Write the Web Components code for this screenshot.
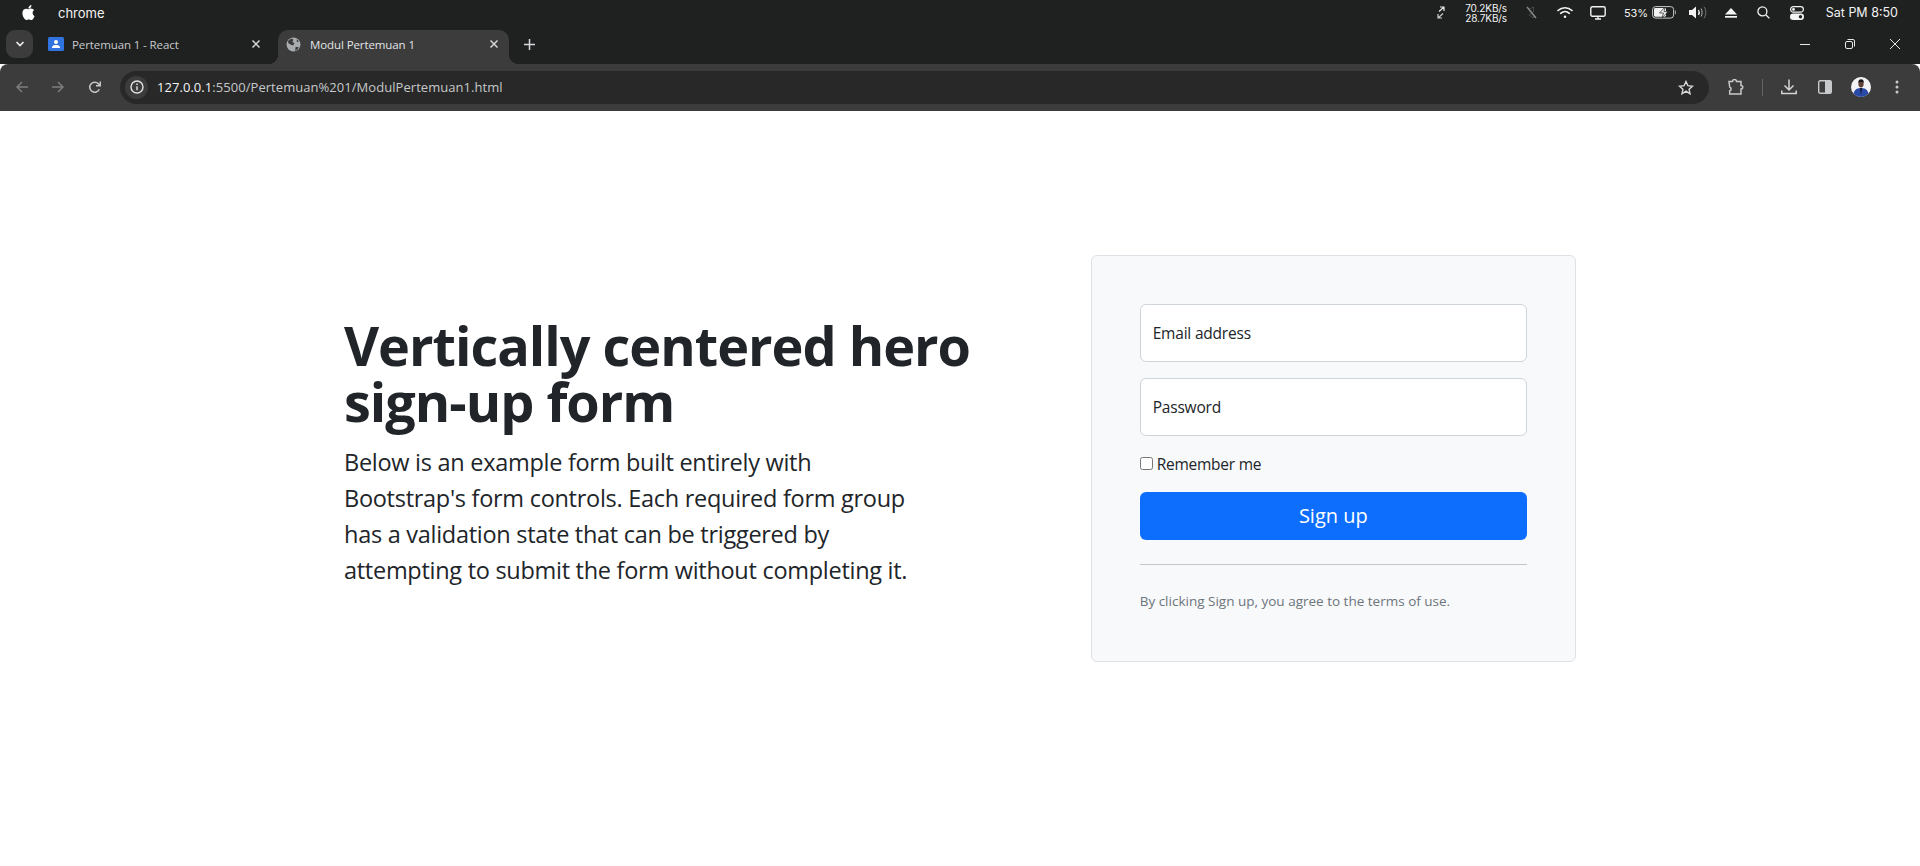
<!DOCTYPE html>
<html lang="en">
<head>
<meta charset="utf-8">
<title>Modul Pertemuan 1</title>
<style>
    html, body { margin: 0; height: 100%; background: #fff; overflow: hidden; }
    body { font-family: "Open Sans", "Noto Sans", sans-serif; color: #212529; }
</style>
</head>
<body>
<mac-menubar></mac-menubar>
<chrome-tabstrip>
    <chrome-tab icon="contact">Pertemuan 1 - React</chrome-tab>
    <chrome-tab icon="globe" active>Modul Pertemuan 1</chrome-tab>
</chrome-tabstrip>
<chrome-toolbar url-host="127.0.0.1" url-rest=":5500/Pertemuan%201/ModulPertemuan1.html"></chrome-toolbar>
<hero-section>
    <span slot="title">Vertically centered hero sign-up form</span>
    <span slot="lead">Below is an example form built entirely with Bootstrap's form controls. Each required form group has a validation state that can be triggered by attempting to submit the form without completing it.</span>
    <signup-form slot="aside">
        <float-field type="email">Email address</float-field>
        <float-field type="password">Password</float-field>
    </signup-form>
</hero-section>

<script>
const ICONS = {
    apple: `<svg width="15" height="17" viewBox="0 0 24 24" fill="#fff"><path d="M12.152 6.896c-.948 0-2.415-1.078-3.96-1.04-2.04.027-3.91 1.183-4.961 3.014-2.117 3.675-.546 9.103 1.519 12.09 1.013 1.454 2.208 3.09 3.792 3.039 1.52-.065 2.09-.987 3.935-.987 1.831 0 2.35.987 3.96.948 1.637-.026 2.676-1.48 3.676-2.948 1.156-1.688 1.636-3.325 1.662-3.415-.039-.013-3.182-1.221-3.22-4.857-.026-3.04 2.48-4.494 2.597-4.559-1.429-2.09-3.623-2.324-4.39-2.376-2-.156-3.675 1.09-4.61 1.09zM15.53 3.83c.843-1.012 1.4-2.427 1.245-3.83-1.207.052-2.662.805-3.532 1.818-.78.896-1.454 2.338-1.273 3.714 1.338.104 2.715-.688 3.559-1.701"/></svg>`,
    arrows: `<svg width="8" height="13" viewBox="0 0 8 13" fill="none" stroke="#e8e8e8" stroke-width="1.2"><path d="M3 1h4v4M7 1 2 5.5"/><path d="M1 8v4h4M1 12l5-4.5" opacity=".85"/></svg>`,
    bluetooth: `<svg width="11" height="13" viewBox="0 0 11 13" fill="none" stroke="#8b8b8b"><path d="M3 3.2 7.5 1v4.500L3 9l4.500 3V8" stroke-width=".8" opacity=".45"/><path d="M1 1l9 11" stroke-width="1.4"/></svg>`,
    wifi: `<svg width="16" height="13" viewBox="0 0 16 13" fill="none" stroke="#f2f2f2" stroke-width="1.7" stroke-linecap="round"><path d="M1 4.500c4-3.700 10-3.700 14 0"/><path d="M3.700 7.300c2.500-2.200 6.100-2.200 8.600 0"/><circle cx="8" cy="10.800" r=".7" fill="#f2f2f2" stroke-width="1.2"/></svg>`,
    monitor: `<svg width="16" height="14" viewBox="0 0 16 14" fill="none" stroke="#f2f2f2" stroke-width="1.4"><rect x=".8" y=".8" width="14.400" height="9.400" rx="1.400"/><path d="M5 13h6M8 10.500V13"/></svg>`,
    battery: `<svg width="25" height="13" viewBox="0 0 25 13"><rect x=".6" y=".6" width="21" height="11.500" rx="3" fill="none" stroke="#c9c9c9" stroke-width="1"/><rect x="2" y="2" width="12" height="8.700" rx="1.400" fill="#f2f2f2"/><path d="M13 1 7.500 7h4L10 12l6-6.400h-4z" fill="#f2f2f2" stroke="#202221" stroke-width=".7"/><path d="M23.400 4.500v3.600" stroke="#a8a8a8" stroke-width="1"/></svg>`,
    volume: `<svg width="18" height="13" viewBox="0 0 18 13" fill="none"><path d="M0 4h3l4-3.600v12L3 9H0z" fill="#f4f4f4"/><path d="M9.500 4c.9 1.500.9 3.500 0 5" stroke="#f4f4f4" stroke-width="1.3"/><path d="M12 2.500c1.500 2.500 1.500 5.500 0 8" stroke="#bbb" stroke-width="1"/><path d="M15 .8c2.400 3.600 2.400 7.800 0 11.400" stroke="#777" stroke-width="1"/></svg>`,
    eject: `<svg width="12" height="10" viewBox="0 0 12 10" fill="#f4f4f4"><path d="M6 0l6 6.400H0z"/><rect y="8" width="12" height="1.700"/></svg>`,
    search: `<svg width="13" height="13" viewBox="0 0 13 13" fill="none" stroke="#f4f4f4" stroke-width="1.3"><circle cx="5.400" cy="5.400" r="4.500"/><path d="M8.800 8.800l3.600 3.600"/></svg>`,
    toggles: `<svg width="14" height="14" viewBox="0 0 14 14"><rect x=".6" y=".6" width="12.800" height="5.600" rx="2.800" fill="none" stroke="#f4f4f4" stroke-width="1.2"/><circle cx="3.500" cy="3.400" r="1.400" fill="#f4f4f4"/><rect y="7.500" width="14" height="6.500" rx="3.200" fill="#f4f4f4"/><circle cx="10.500" cy="10.700" r="1.700" fill="#202221"/></svg>`,
    contact: `<svg width="16" height="14" viewBox="0 0 16 14"><rect width="16" height="14" rx="1.500" fill="#2f74e0"/><circle cx="8" cy="5" r="2" fill="#fff"/><path d="M4 10.500c0-1.800 2.400-2.400 4-2.400s4 .6 4 2.400V11H4z" fill="#fff"/></svg>`,
    globe: `<svg width="15" height="15" viewBox="0 0 14 14"><circle cx="7" cy="7" r="6.500" fill="#a9acaf"/><path d="M2 3.500l3-2 2 1-1 2 2 1.500-1.500 2L5 7.500 2 5.500zM9 9l3 .5-1.500 2.500L8.500 13zM9.500 2l2.500 2-1.500 1z" fill="#3c3c3c"/></svg>`,
    close: `<svg width="10" height="10" viewBox="0 0 10 10" stroke="currentColor" stroke-width="1.5" fill="none"><path d="M1.500 1.500l7 7M8.500 1.500l-7 7"/></svg>`,
    chevron: `<svg width="10" height="6" viewBox="0 0 10 6" fill="none" stroke="#e8eaed" stroke-width="1.7"><path d="M1.500 1l3.500 3.500L8.500 1"/></svg>`,
    plus: `<svg width="11" height="11" viewBox="0 0 11 11" stroke="#d6d8da" stroke-width="1.5"><path d="M5.500 0v11M0 5.500h11"/></svg>`,
    min: `<svg width="10" height="10" viewBox="0 0 10 10" stroke="#e8e8e8"><path d="M0 5.500h10"/></svg>`,
    restore: `<svg width="10" height="10" viewBox="0 0 10 10" fill="none" stroke="#e8e8e8"><rect x=".5" y="2.500" width="7" height="7" rx="1.500"/><path d="M2.500.5h5.500a1.500 1.500 0 0 1 1.500 1.500v5.500"/></svg>`,
    winclose: `<svg width="10" height="10" viewBox="0 0 10 10" stroke="#e8e8e8" fill="none"><path d="M0 0l10 10M10 0L0 10"/></svg>`,
    back: `<svg width="12" height="12" viewBox="0 0 12 12" fill="none" stroke="#7b7d7f" stroke-width="1.5"><path d="M12 6H1.500M6 1L1 6l5 5"/></svg>`,
    forward: `<svg width="12" height="12" viewBox="0 0 12 12" fill="none" stroke="#7b7d7f" stroke-width="1.5"><path d="M0 6h10.500M6 1l5 5-5 5"/></svg>`,
    reload: `<svg width="13" height="13" viewBox="0 0 13 13" fill="none" stroke="#c7c9cb" stroke-width="1.5"><path d="M11.300 8.200A5 5 0 1 1 10.500 2.900L12 4.300"/><path d="M12.300 .5v4.300H8" /></svg>`,
    info: `<svg width="14" height="14" viewBox="0 0 14 14" fill="none" stroke="#e3e3e3" stroke-width="1.4"><circle cx="7" cy="7" r="6"/><path d="M7 6.200v4" /><path d="M7 3.400v1.500"/></svg>`,
    star: `<svg width="16" height="15" viewBox="0 0 16 15" fill="none" stroke="#d8dadc" stroke-width="1.4"><path d="M8 1.500l1.900 4.200 4.600.5-3.400 3.100.9 4.500L8 11.100l-4 2.700.9-4.500L1.500 6.200l4.600-.5z"/></svg>`,
    puzzle: `<svg width="17" height="16" viewBox="0 0 17 16" fill="none" stroke="#c7c9cb" stroke-width="1.5"><path d="M1 2.500h3.500a2 2 0 0 1 4 0H13v4a1.700 1.700 0 0 1 0 3.500v5H1.700v-3.200a2 2 0 0 0 0-3.800z"/></svg>`,
    download: `<svg width="16" height="16" viewBox="0 0 16 16" fill="none" stroke="#d2d4d6" stroke-width="1.5"><path d="M8 .5v10M3.500 6.500L8 11l4.500-4.500M.8 11.500v3h14.400v-3"/></svg>`,
    panel: `<svg width="14" height="14" viewBox="0 0 14 14"><rect x=".7" y=".7" width="12.600" height="12.600" rx="1.500" fill="none" stroke="#c7c9cb" stroke-width="1.4"/><rect x="7" y="1" width="6" height="12" fill="#c7c9cb"/></svg>`,
    avatar: `<svg width="20" height="20" viewBox="0 0 20 20"><defs><clipPath id="av"><circle cx="10" cy="10" r="10"/></clipPath></defs><g clip-path="url(#av)"><rect width="20" height="20" fill="#f3f3f5"/><path d="M2 20c.3-6 2.500-9 8-9s7.700 3 8 9z" fill="#2a4aa8"/><path d="M8.800 11l1.200 7 1.200-7z" fill="#141a38"/><ellipse cx="10" cy="7" rx="2.600" ry="3.400" fill="#5e4034"/><path d="M7.300 6c-.2-2.800 1.200-3.800 2.800-3.800s3 1 2.600 3.800c-1-1.200-4.300-1.200-5.400 0z" fill="#17151a"/></g></svg>`,
    dots: `<svg width="4" height="14" viewBox="0 0 4 14" fill="#c7c9cb"><circle cx="2" cy="2" r="1.5"/><circle cx="2" cy="7" r="1.5"/><circle cx="2" cy="12" r="1.5"/></svg>`
};

class MacMenubar extends HTMLElement {
    constructor() {
        super();
        this.attachShadow({ mode: "open" });
        this.shadowRoot.innerHTML = `
            <style>
                :host {
                    display: flex;
                    align-items: center;
                    height: 25px;
                    padding: 0 22px 0 21px;
                    background: #1f2120;
                    color: #f2f2f2;
                    font-family: Inter, sans-serif;
                    font-size: 12.5px;
                }
                .app { margin-left: 22px; font-size: 13px; }
                .right { margin-left: auto; display: flex; align-items: center; }
                .right > * { display: flex; }
                .speed { display: block; font-size: 10px; line-height: 10px; letter-spacing: -.1px; text-align: right; }
                .pct { font-size: 11px; letter-spacing: -.2px; }
                svg { display: block; }
            </style>
            <span style="display:flex">${ICONS.apple}</span>
            <span class="app">chrome</span>
            <div class="right">
                <span>${ICONS.arrows}</span>
                <span class="speed" style="margin-left:20px">70.2KB/s<br>28.7KB/s</span>
                <span style="margin-left:19px">${ICONS.bluetooth}</span>
                <span style="margin-left:20px">${ICONS.wifi}</span>
                <span style="margin-left:17px">${ICONS.monitor}</span>
                <span class="pct" style="margin-left:18px">53%</span>
                <span style="margin-left:4px">${ICONS.battery}</span>
                <span style="margin-left:12px">${ICONS.volume}</span>
                <span style="margin-left:18px">${ICONS.eject}</span>
                <span style="margin-left:20px">${ICONS.search}</span>
                <span style="margin-left:20px">${ICONS.toggles}</span>
                <span style="margin-left:22px">Sat PM 8:50</span>
            </div>
        `;
    }
}

class ChromeTab extends HTMLElement {
    constructor() {
        super();
        this.attachShadow({ mode: "open" });
    }

    connectedCallback() {
        this.shadowRoot.innerHTML = `
            <style>
                :host {
                    display: flex;
                    align-items: center;
                    position: relative;
                    box-sizing: border-box;
                    width: 231px;
                    height: 34px;
                    padding: 0 10px 6px 8px;
                    border-radius: 10px 10px 0 0;
                    color: #c7cacc;
                }
                :host([active]) { background: #3c3c3c; color: #e3e5e7; }
                :host([active])::before, :host([active])::after {
                    content: "";
                    position: absolute;
                    bottom: 0;
                    width: 10px;
                    height: 10px;
                }
                :host([active])::before { left: -10px; background: radial-gradient(circle at 0 0, transparent 10px, #3c3c3c 10.5px); }
                :host([active])::after { right: -10px; background: radial-gradient(circle at 100% 0, transparent 10px, #3c3c3c 10.5px); }
                .title { margin-left: 8px; font-size: 11.5px; letter-spacing: -.1px; flex: 1; white-space: nowrap; }
                .icon, .x { display: flex; }
                .icon { width: 16px; }
                .x { color: #d4d6d8; }
            </style>
            <span class="icon">${ICONS[this.getAttribute("icon")]}</span>
            <span class="title"><slot></slot></span>
            <span class="x">${ICONS.close}</span>
        `;
    }
}

class ChromeTabstrip extends HTMLElement {
    constructor() {
        super();
        this.attachShadow({ mode: "open" });
        this.shadowRoot.innerHTML = `
            <style>
                :host {
                    display: flex;
                    align-items: flex-end;
                    height: 39px;
                    background: #1f2120;
                    font-family: "Open Sans", sans-serif;
                }
                .list {
                    display: flex;
                    align-items: center;
                    justify-content: center;
                    width: 27px;
                    height: 28px;
                    margin: 0 7px 6px 6px;
                    border-radius: 9px;
                    background: #3c3c3c;
                }
                .tabs { display: flex; margin-right: 15px; gap: 7px; }
                .plus { display: flex; margin-bottom: 14px; }
                .win { display: flex; gap: 35px; margin: 0 20px 15px auto; }
                .win span { display: flex; }
            </style>
            <div class="list">${ICONS.chevron}</div>
            <div class="tabs"><slot></slot></div>
            <span class="plus">${ICONS.plus}</span>
            <div class="win">
                <span>${ICONS.min}</span>
                <span>${ICONS.restore}</span>
                <span>${ICONS.winclose}</span>
            </div>
        `;
    }
}

class ChromeToolbar extends HTMLElement {
    constructor() {
        super();
        this.attachShadow({ mode: "open" });
    }

    connectedCallback() {
        this.shadowRoot.innerHTML = `
            <style>
                :host {
                    display: flex;
                    align-items: center;
                    box-sizing: border-box;
                    height: 47px;
                    padding-bottom: 1px;
                    background: #3c3c3c;
                    border-radius: 8px 8px 0 0;
                    font-family: "Open Sans", sans-serif;
                }
                .btn { display: flex; justify-content: center; width: 34px; }
                .nav { display: flex; margin-left: 4px; margin-right: 8px; }
                .nav .btn { width: 36px; }
                .omni {
                    display: flex;
                    align-items: center;
                    flex: none;
                    width: 1589px;
                    height: 33px;
                    box-sizing: border-box;
                    padding: 0 15px 0 5px;
                    border-radius: 17px;
                    background: #282828;
                    font-size: 13px;
                    letter-spacing: .05px;
                    color: #c6c8ca;
                }
                .info {
                    display: flex;
                    align-items: center;
                    justify-content: center;
                    width: 23px;
                    height: 23px;
                    border-radius: 50%;
                    background: #3c3c3c;
                    margin-right: 9px;
                }
                .host { color: #f1f3f4; }
                .url { flex: 1; white-space: nowrap; }
                .star { display: flex; }
                .end { display: flex; align-items: center; margin-left: 10px; }
                .sep { width: 1px; height: 17px; background: #626466; margin: 0 9px 0 9px; }
                svg { display: block; }
            </style>
            <div class="nav">
                <span class="btn">${ICONS.back}</span>
                <span class="btn">${ICONS.forward}</span>
                <span class="btn">${ICONS.reload}</span>
            </div>
            <div class="omni">
                <span class="info">${ICONS.info}</span>
                <span class="url"><span class="host">${this.getAttribute("url-host")}</span>${this.getAttribute("url-rest")}</span>
                <span class="star">${ICONS.star}</span>
            </div>
            <div class="end">
                <span class="btn">${ICONS.puzzle}</span>
                <span class="sep"></span>
                <span class="btn">${ICONS.download}</span>
                <span class="btn" style="margin-left:2px">${ICONS.panel}</span>
                <span class="btn" style="margin-left:2px">${ICONS.avatar}</span>
                <span class="btn" style="margin-left:2px">${ICONS.dots}</span>
            </div>
        `;
    }
}

class HeroSection extends HTMLElement {
    constructor() {
        super();
        this.attachShadow({ mode: "open" });
        this.shadowRoot.innerHTML = `
            <style>
                :host {
                    display: block;
                    box-sizing: border-box;
                    width: 1280px;
                    margin: 0 auto;
                    padding: 144px 24px 0;
                    font-family: "Open Sans", sans-serif;
                }
                .row { display: grid; grid-template-columns: 698.67px 485.33px; column-gap: 48px; align-items: center; }
                .intro { padding-bottom: 13px; }
                h1 { width: 640px; margin: 0 0 15px; font-size: 54px; line-height: 56px; font-weight: 700; letter-spacing: -1px; }
                p { width: 580px; margin: 0; font-size: 23.5px; line-height: 36px; letter-spacing: -.28px; }
            </style>
            <div class="row">
                <div class="intro">
                    <h1><slot name="title"></slot></h1>
                    <p><slot name="lead"></slot></p>
                </div>
                <slot name="aside"></slot>
            </div>
        `;
    }
}

class FloatField extends HTMLElement {
    constructor() {
        super();
        this.attachShadow({ mode: "open" });
    }

    connectedCallback() {
        this.shadowRoot.innerHTML = `
            <style>
                :host { display: block; position: relative; margin-bottom: 16px; }
                input {
                    display: block;
                    box-sizing: border-box;
                    width: 100%;
                    height: 58px;
                    border: 1px solid #ced4da;
                    border-radius: 6px;
                    background: #fff;
                }
                label {
                    position: absolute;
                    left: 13px;
                    top: 17px;
                    font-size: 15.5px;
                    line-height: 24px;
                    letter-spacing: -.2px;
                    color: #212529;
                }
            </style>
            <input type="${this.getAttribute("type")}">
            <label><slot></slot></label>
        `;
    }
}

class SignupForm extends HTMLElement {
    constructor() {
        super();
        this.attachShadow({ mode: "open" });
        this.shadowRoot.innerHTML = `
            <style>
                :host {
                    display: block;
                    box-sizing: border-box;
                    padding: 48px;
                    border: 1px solid #dee2e6;
                    border-radius: 6px;
                    background: #f8f9fa;
                    font-size: 16px;
                    line-height: 24px;
                }
                .check { display: flex; align-items: center; height: 24px; margin-bottom: 16px; font-size: 15.5px; letter-spacing: -.25px; }
                .check input { width: 13px; height: 13px; margin: 0 4px 1px 0; }
                button {
                    display: block;
                    width: 100%;
                    height: 48px;
                    border: 0;
                    border-radius: 6px;
                    background: #0d6efd;
                    color: #fff;
                    font: inherit;
                    font-size: 20px;
                }
                hr { margin: 24px 0; border: 0; border-top: 1px solid #c5c6c7; }
                small { display: block; font-size: 13.5px; line-height: 24px; color: #6c757d; }
            </style>
            <slot></slot>
            <label class="check"><input type="checkbox">Remember me</label>
            <button type="button">Sign up</button>
            <hr>
            <small>By clicking Sign up, you agree to the terms of use.</small>
        `;
    }
}

customElements.define("mac-menubar", MacMenubar);
customElements.define("chrome-tab", ChromeTab);
customElements.define("chrome-tabstrip", ChromeTabstrip);
customElements.define("chrome-toolbar", ChromeToolbar);
customElements.define("hero-section", HeroSection);
customElements.define("float-field", FloatField);
customElements.define("signup-form", SignupForm);
</script>
</body>
</html>
